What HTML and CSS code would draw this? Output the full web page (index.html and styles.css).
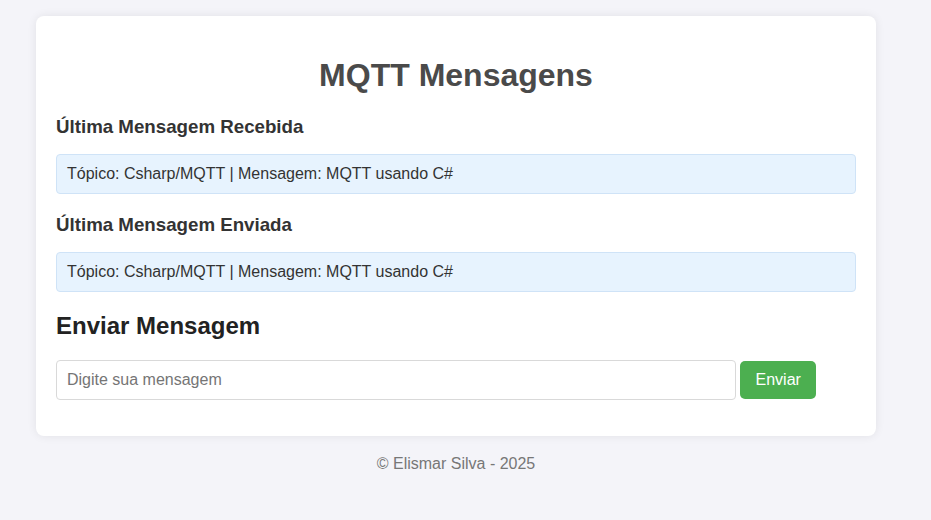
FILE: index.html
```html
<!DOCTYPE html>
<html lang="pt-BR">
<head>
<meta charset="utf-8">
<title>MQTT Mensagens</title>
<link rel="stylesheet" href="styles.css">
</head>
<body>
<div class="container">
  <h1 class="title">MQTT Mensagens</h1>
  <h3 class="section-title">Última Mensagem Recebida</h3>
  <div class="message-box">Tópico: Csharp/MQTT | Mensagem: MQTT usando C#</div>
  <h3 class="section-title">Última Mensagem Enviada</h3>
  <div class="message-box">Tópico: Csharp/MQTT | Mensagem: MQTT usando C#</div>
  <h2 class="send-title">Enviar Mensagem</h2>
  <form class="send-form" onsubmit="return false">
    <input class="msg-input" type="text" placeholder="Digite sua mensagem">
    <button class="send-btn" type="submit">Enviar</button>
  </form>
</div>
<footer class="footer">© Elismar Silva - 2025</footer>
</body>
</html>
```
FILE: styles.css
```css
html, body {
  margin: 0;
}
body {
  background: #f4f4f9;
  font-family: "Liberation Sans", Arial, sans-serif;
  color: #333;
  padding: 16px 36px;
}
.container {
  width: 800px;
  background: #fff;
  padding: 20px;
  border-radius: 8px;
  box-shadow: 0 0 10px rgba(0, 0, 0, 0.08);
}
.title {
  text-align: center;
  font-size: 32px;
  color: #4a4a4a;
  margin: 21px 0 22px;
}
.section-title {
  font-size: 18.72px;
  color: #333;
  margin: 20px 0 16px;
}
.message-box {
  background: #e7f3fe;
  border: 1px solid #cfe3f7;
  border-radius: 4px;
  padding: 10px;
  font-size: 16px;
  color: #333;
  line-height: 18px;
}
.send-title {
  font-size: 24px;
  color: #222;
  margin: 20px 0 20px;
}
.send-form {
  display: flex;
  align-items: center;
  gap: 4px;
  margin: 0 0 16px;
}
.msg-input {
  box-sizing: border-box;
  width: 680px;
  height: 40px;
  padding: 10px;
  font-family: "Liberation Sans", Arial, sans-serif;
  font-size: 16px;
  border: 1px solid #d9d9d9;
  border-radius: 4px;
  color: #333;
  outline: none;
}
.msg-input::placeholder {
  color: #757575;
}
.send-btn {
  height: 38px;
  padding: 0 15.5px;
  background: #4caf50;
  color: #fff;
  border: none;
  border-radius: 5px;
  font-family: "Liberation Sans", Arial, sans-serif;
  font-size: 16px;
  cursor: pointer;
}
.footer {
  width: 840px;
  text-align: center;
  color: #777;
  font-size: 16px;
  margin-top: 19px;
}
```
